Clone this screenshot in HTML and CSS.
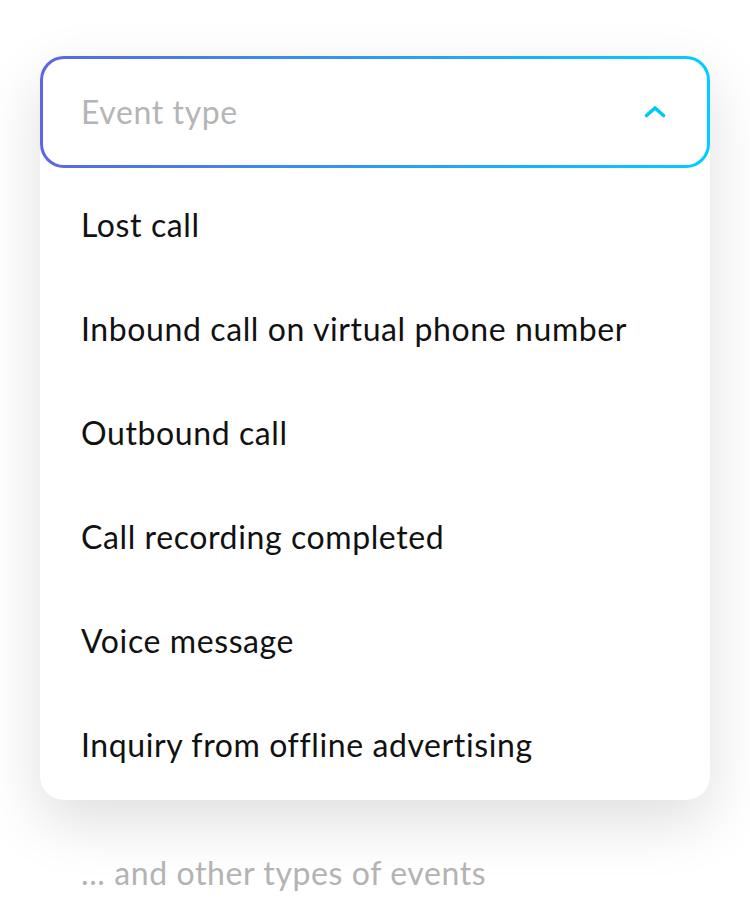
FILE: index.html
```html
<!DOCTYPE html>
<html lang="en">
<head>
<meta charset="utf-8">
<title>Event type</title>
<link rel="stylesheet" href="styles.css">
</head>
<body>
<div class="page">
  <div class="dropdown">
    <div class="field">
      <span class="placeholder">Event type</span>
      <svg class="chevron" width="22" height="12" viewBox="0 0 22 12" aria-hidden="true">
        <path d="M2.5 9.5 L11 2 L19.5 9.5" fill="none" stroke="#00c8ff" stroke-width="3.6" stroke-linecap="round" stroke-linejoin="round"/>
      </svg>
    </div>
    <ul class="options">
      <li class="option">Lost call</li>
      <li class="option">Inbound call on virtual phone number</li>
      <li class="option">Outbound call</li>
      <li class="option">Call recording completed</li>
      <li class="option">Voice message</li>
      <li class="option">Inquiry from offline advertising</li>
    </ul>
  </div>
  <p class="more">... and other types of events</p>
</div>
</body>
</html>
```
FILE: styles.css
```css
* { box-sizing: border-box; }
html, body { margin: 0; padding: 0; background: #ffffff; }
body {
  font-family: "Lato", "Noto Sans", sans-serif;
  color: #111;
  -webkit-font-smoothing: antialiased;
}
.page {
  width: 750px;
  height: 904px;
  padding: 56px 40px 0;
  overflow: hidden;
}
.dropdown {
  width: 670px;
  background: #fff;
  border-radius: 24px;
  box-shadow: 0 22px 60px rgba(0, 0, 0, 0.13);
}
.field {
  height: 112px;
  border: 3px solid transparent;
  border-radius: 24px;
  background:
    linear-gradient(#fff, #fff) padding-box,
    linear-gradient(90deg, #5d66e2 0%, #2aa0f0 55%, #00ceff 100%) border-box;
  display: flex;
  align-items: center;
  justify-content: space-between;
  padding: 0 41px 0 38px;
}
.placeholder {
  font-size: 32px;
  letter-spacing: 0.6px;
  line-height: 40px;
  color: #b5b5b5;
}
.chevron { display: block; }
.options {
  list-style: none;
  margin: 0;
  padding: 5px 0 3px;
}
.option {
  height: 104px;
  display: flex;
  align-items: center;
  padding-left: 41px;
  font-size: 32px;
  letter-spacing: 0.6px;
  line-height: 40px;
  color: #111;
}
.more {
  margin: 0;
  padding: 53px 0 0 41px;
  font-size: 32px;
  letter-spacing: 0.6px;
  color: #b3b3b3;
  line-height: 40px;
}
```
